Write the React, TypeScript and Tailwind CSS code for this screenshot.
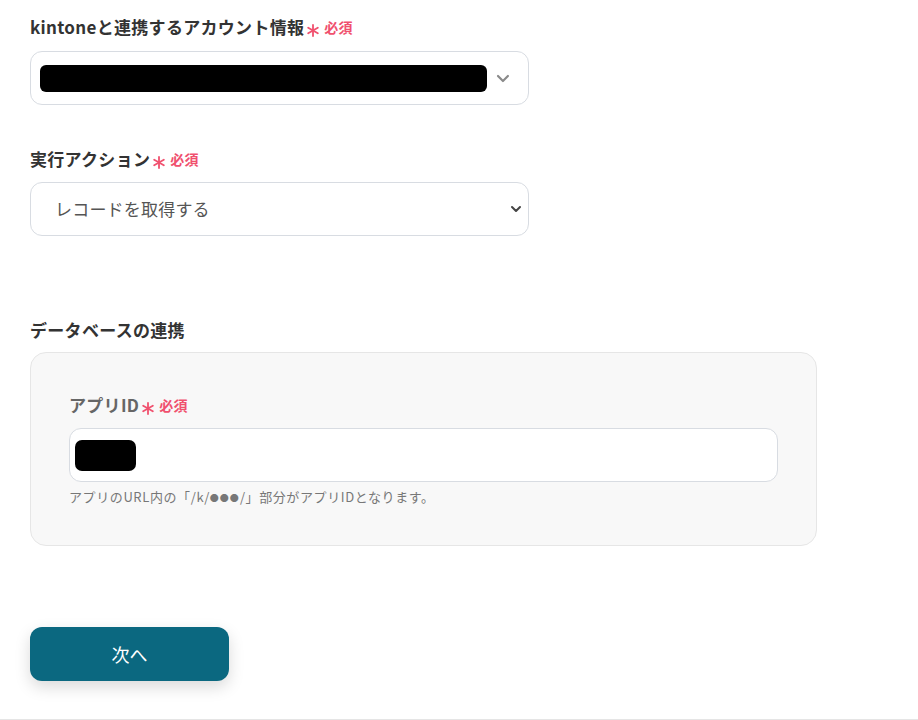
import React from "react";

const font = { fontFamily: '"Noto Sans CJK JP", "Noto Sans", sans-serif' };

function Asterisk() {
  return (
    <svg width="12" height="13" viewBox="0 0 12 13" className="mt-[6px]">
      <g stroke="#f0506e" strokeWidth="1.8" strokeLinecap="round">
        <line x1="6" y1="1" x2="6" y2="12" />
        <line x1="1.2" y1="3.7" x2="10.8" y2="9.3" />
        <line x1="1.2" y1="9.3" x2="10.8" y2="3.7" />
      </g>
    </svg>
  );
}

function Required() {
  return (
    <span className="ml-[3px] inline-flex items-center text-[#f0506e]">
      <Asterisk />
      <span className="ml-[5px] text-[14px] font-bold">必須</span>
    </span>
  );
}

export default function App() {
  return (
    <div
      className="h-[720px] w-[918px] bg-white border-b border-[#e5e5e5] px-[30px] pt-[15px]"
      style={font}
    >
      <div className="flex h-[24px] items-center text-[17px] font-bold text-[#333] tracking-[0.3px]">
        kintoneと連携するアカウント情報
        <Required />
      </div>
      <div className="mt-[12px] flex h-[54px] w-[499px] items-center rounded-[12px] border border-[#d8dce2] bg-white pl-[9px] pr-[18px]">
        <div className="h-[27px] w-[450px] rounded-[6px] bg-black" />
        <svg className="ml-[9px]" width="14" height="9" viewBox="0 0 14 9">
          <path d="M2 2 L7 7 L12 2" stroke="#8a8a8a" strokeWidth="2.2" fill="none" strokeLinecap="round" strokeLinejoin="round" />
        </svg>
      </div>

      <div className="mt-[42px] flex h-[24px] items-center text-[17px] font-bold text-[#333] tracking-[0.3px]">
        実行アクション
        <Required />
      </div>
      <div className="mt-[11px] flex h-[54px] w-[499px] items-center justify-between rounded-[12px] border border-[#d8dce2] bg-white pl-[24px] pr-[6px]">
        <span className="text-[17px] text-[#555] tracking-[0.2px]">レコードを取得する</span>
        <svg width="12" height="8" viewBox="0 0 12 8">
          <path d="M2 2 L6 6 L10 2" stroke="#444" strokeWidth="2" fill="none" strokeLinecap="round" strokeLinejoin="round" />
        </svg>
      </div>

      <div className="mt-[82px] flex h-[24px] items-center text-[17px] font-bold text-[#333] tracking-[0.3px]">
        データベースの連携
      </div>
      <div className="mt-[10px] w-[787px] rounded-[16px] border border-[#e6e6e6] bg-[#f8f8f8] px-[38px] pt-[40px] pb-[39px]">
        <div className="flex h-[24px] items-center text-[17px] font-bold text-[#666] tracking-[0.3px]">
          アプリID
          <Required />
        </div>
        <div className="mt-[11px] flex h-[54px] w-[709px] items-center rounded-[12px] border border-[#d8dce2] bg-white pl-[5px]">
          <div className="h-[31px] w-[61px] rounded-[7px] bg-black" />
        </div>
        <div className="mt-[6px] h-[18px] text-[13px] leading-[18px] text-[#777] tracking-[0.6px]">
          アプリのURL内の「/k/<span className="text-[9px] tracking-[1px] align-[1px]">●●●</span>/」部分がアプリIDとなります。
        </div>
      </div>

      <button
        className="mt-[81px] flex h-[54px] w-[199px] items-center justify-center rounded-[12px] bg-[#0b6880] text-[18px] text-white shadow-[0_6px_16px_rgba(0,0,0,0.15)]"
        style={font}
      >
        次へ
      </button>
    </div>
  );
}
